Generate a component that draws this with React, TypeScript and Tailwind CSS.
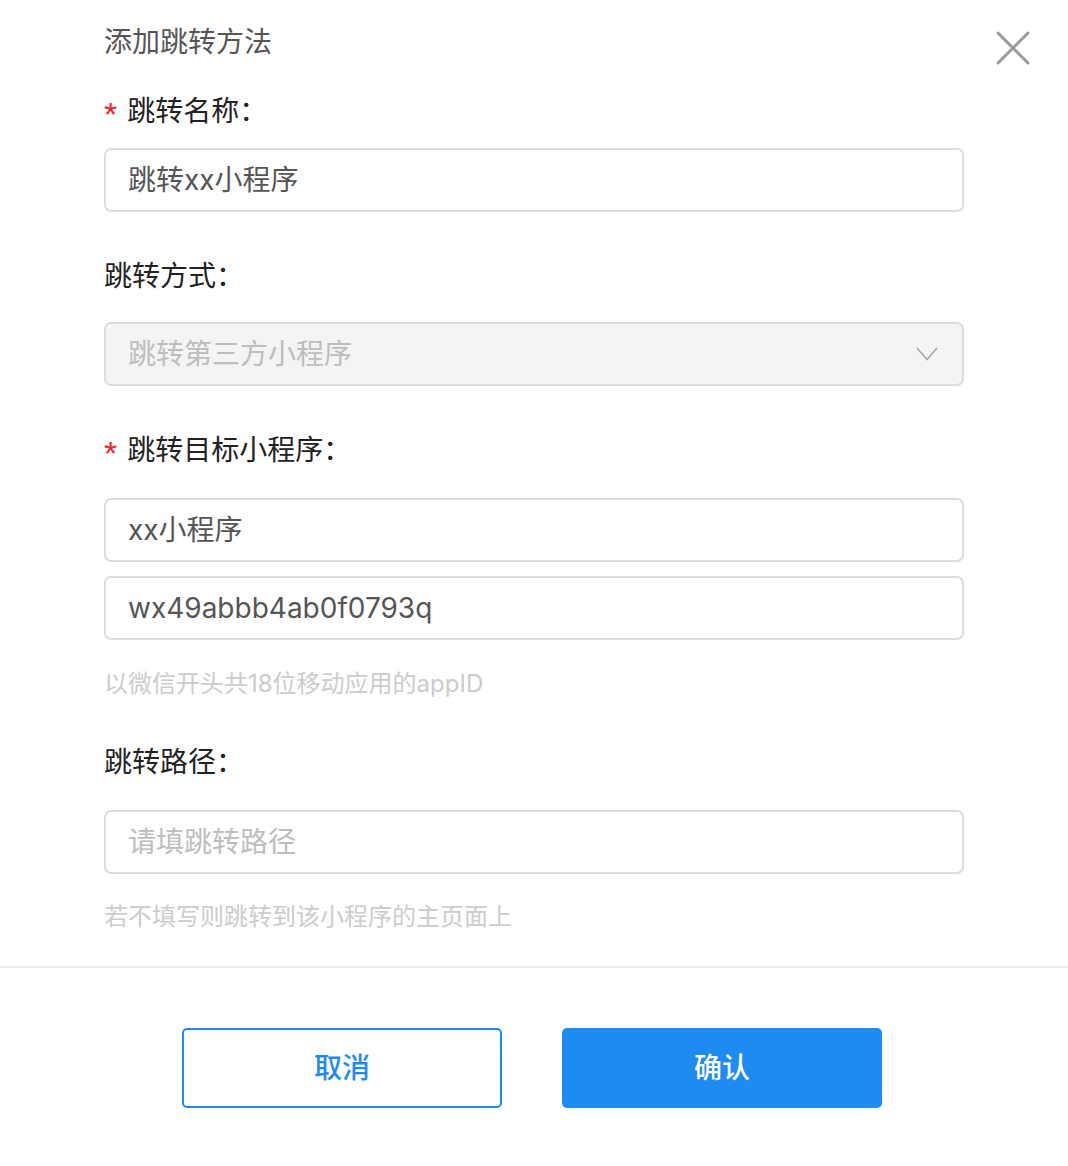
import React from "react";

const font = { fontFamily: "Inter, 'Noto Sans CJK SC', sans-serif" };

function Label({ text, required, className }: { text: string; required?: boolean; className?: string }) {
  return (
    <div className={"flex h-[48px] items-center text-[28px] text-[#222] " + (className || "")}>
      {required && (
        <span className="mr-[10px] mt-[6px] text-[34px] leading-none text-[#f5222d]" style={{ fontFamily: "'Liberation Sans', sans-serif" }}>
          *
        </span>
      )}
      <span>{text}</span>
    </div>
  );
}

function Field({ value, placeholder, className }: { value?: string; placeholder?: string; className?: string }) {
  return (
    <div
      className={
        "flex h-[64px] w-[860px] items-center rounded-[7px] border-2 border-[#dcdcdc] bg-white px-[22px] text-[28px] " +
        (value ? "text-[#555]" : "text-[#bdbdbd]") +
        " " +
        (className || "")
      }
    >
      {value || placeholder}
    </div>
  );
}

export default function App() {
  return (
    <div className="h-[1166px] w-[1068px] bg-white" style={font}>
      <div className="flex justify-between pl-[104px] pr-[38px]">
        <div className="flex h-[84px] items-center text-[28px] text-[#555]">添加跳转方法</div>
        <svg className="mt-[31px]" width="34" height="34" viewBox="0 0 34 34">
          <path d="M2 2 L32 32 M32 2 L2 32" stroke="#9a9a9a" strokeWidth="3" strokeLinecap="round" />
        </svg>
      </div>
      <div className="flex flex-col pl-[104px]">
        <Label text="跳转名称：" required className="mt-[3px]" />
        <Field value="跳转xx小程序" className="mt-[13px]" />

        <Label text="跳转方式：" className="mt-[40px]" />
        <div className="mt-[22px] flex h-[64px] w-[860px] items-center justify-between rounded-[7px] border-2 border-[#dcdcdc] bg-[#f4f4f4] pl-[22px] pr-[24px] text-[28px] text-[#bdbdbd]">
          <span>跳转第三方小程序</span>
          <svg width="22" height="14" viewBox="0 0 22 14">
            <path d="M1 1 L11 12.5 L21 1" fill="none" stroke="#a8a8a8" strokeWidth="1.6" />
          </svg>
        </div>

        <Label text="跳转目标小程序：" required className="mt-[40px]" />
        <Field value="xx小程序" className="mt-[24px]" />
        <Field value="wx49abbb4ab0f0793q" className="mt-[14px]" />
        <div className="mt-[24px] flex h-[40px] items-center text-[24px] text-[#cccccc]">以微信开头共18位移动应用的appID</div>

        <Label text="跳转路径：" className="mt-[34px]" />
        <Field placeholder="请填跳转路径" className="mt-[24px]" />
        <div className="mt-[23px] flex h-[40px] items-center text-[24px] text-[#cccccc]">若不填写则跳转到该小程序的主页面上</div>
      </div>
      <div className="mt-[29px] h-[2px] w-full bg-[#ececec]" />
      <div className="mt-[60px] flex gap-[60px] pl-[182px]">
        <button className="flex h-[80px] w-[320px] items-center justify-center rounded-[5px] border-2 border-[#1e8bf3] bg-white text-[28px] font-medium text-[#1e8bf3]">
          取消
        </button>
        <button className="flex h-[80px] w-[320px] items-center justify-center rounded-[5px] bg-[#1e8bf3] text-[28px] font-medium text-white">
          确认
        </button>
      </div>
    </div>
  );
}
